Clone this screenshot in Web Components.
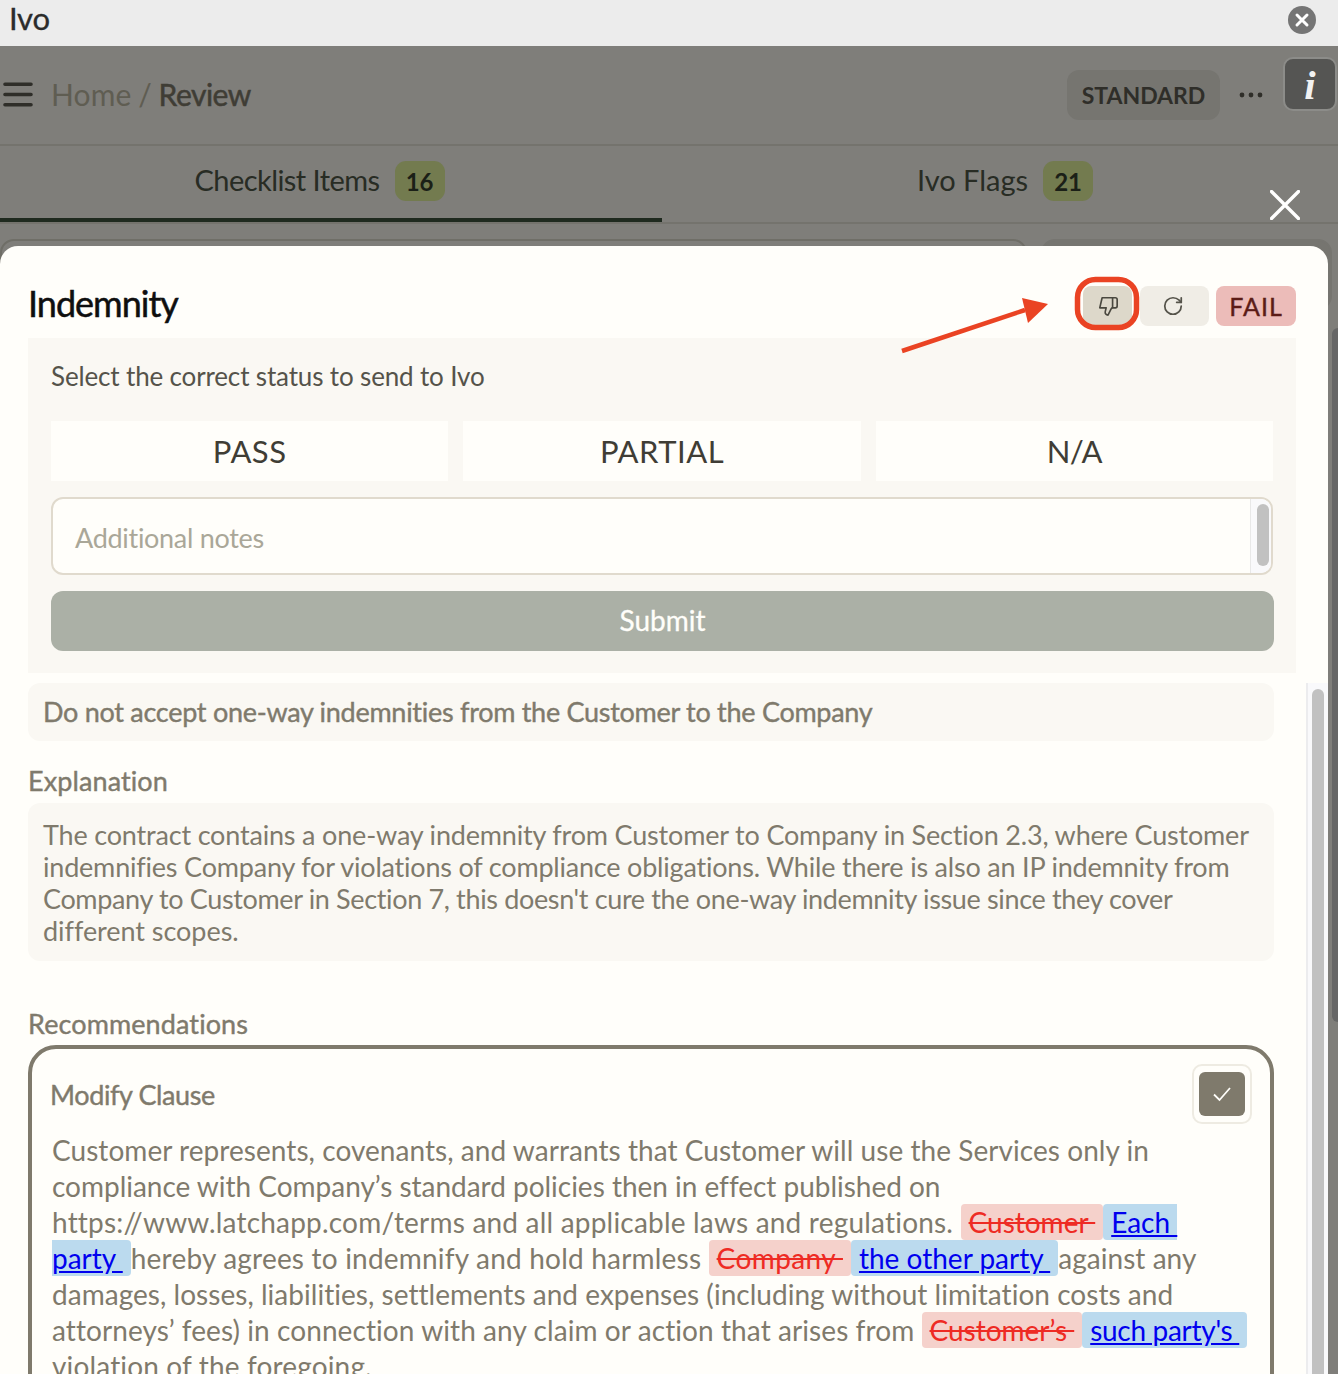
<!DOCTYPE html>
<html lang="en">
<head>
<meta charset="utf-8">
<title>Ivo</title>
<style>
  html, body { margin: 0; height: 1374px; overflow: hidden; background: #7f7e7a; font-family: Lato, "Noto Sans", sans-serif; }
</style>
</head>
<body>
<ivo-window>
  <ivo-page></ivo-page>
  <ivo-modal></ivo-modal>
</ivo-window>

<script>
// small helper so each element only has to give its markup
class Base extends HTMLElement {
  constructor () {
    super()
    this.attachShadow({ mode: 'open' }).innerHTML = this.constructor.markup
  }
}

customElements.define('ivo-window', class extends Base {
  static markup = `
  <style>
    :host { display: block; position: relative; height: 1374px; overflow: hidden; }
    .title { height: 46px; background: #ececec; display: flex; align-items: center; justify-content: space-between; padding: 0 22px 0 9px; box-sizing: border-box; font-size: 31px; color: #2b2b2b; }
    .title span { position: relative; top: -5px; -webkit-text-stroke: .3px; letter-spacing: -.2px; }
    .title svg { display: block; position: relative; top: -3px; }
  </style>
  <div class="title">
    <span>Ivo</span>
    <svg width="28" height="28" viewBox="0 0 28 28"><circle cx="14" cy="14" r="14" fill="#757575"/><path d="M9 9l10 10M19 9L9 19" stroke="#fff" stroke-width="3" stroke-linecap="round"/></svg>
  </div>
  <slot></slot>`
})

customElements.define('ivo-page', class extends Base {
  static markup = `
  <style>
    :host { display: block; }
    header { height: 100px; box-sizing: border-box; border-bottom: 2px solid #74736d; display: flex; align-items: center; padding: 0 1px 0 3px; font-size: 30px; }
    .burger { margin-right: 18px; display: block; margin-top: -2px; }
    .crumb { color: #5f5d52; letter-spacing: .1px; margin-top: -2px; word-spacing: -1px; }
    .crumb b { color: #3f3d35; font-weight: 400; -webkit-text-stroke: .5px; letter-spacing: -.5px; }
    .spacer { flex: 1; }
    .std { width: 153px; height: 50px; border-radius: 12px; background: #767570; color: #2f2e29; font-size: 23px; font-weight: 700; display: flex; align-items: center; justify-content: center; }
    .dots { margin: 0 20px 0 19px; display: block; }
    .info { width: 54px; height: 54px; box-sizing: border-box; margin-top: -22px; border-radius: 10px; background: #555553; border: 2px solid #8c8c89; color: #f2f2f2; font: italic 700 41px/52px "Liberation Serif", serif; text-align: center; }
    nav { height: 78px; box-sizing: border-box; border-bottom: 2px solid #74736d; display: flex; }
    .tab { flex: 1; height: 76px; box-sizing: border-box; display: flex; align-items: center; justify-content: center; gap: 15px; font-size: 29px; color: #282c24; padding: 0 0 6px 10px; }
    .tab.on { border-bottom: 4px solid #1f2a1f; padding: 0 23px 2px 0; flex: 0 0 662px; letter-spacing: -.55px; }
    .lbl { margin-top: -3px; }
    .badge { height: 40px; min-width: 50px; border-radius: 11px; background: #737b4f; color: #1b2017; font-size: 24px; font-weight: 700; letter-spacing: 0; display: flex; align-items: center; justify-content: center; }
    .behind { display: flex; gap: 14px; padding-top: 15px; }
    .behind div { height: 71px; border: 2px solid #6f6e67; border-radius: 14px; background: #7f7e7a; box-sizing: border-box; }
    .behind .a { width: 1027px; }
    .behind .b { width: 291px; background: #767570; border-color: #767570; }
    .bar { position: absolute; right: 0; top: 328px; width: 6px; height: 694px; background: #666; border-radius: 6px 0 0 6px; }
    .close { position: absolute; left: 1270px; top: 190px; display: block; }
  </style>
  <header>
    <svg class="burger" width="30" height="25" viewBox="0 0 30 25"><path d="M2 2.2h26M2 12.5h26M2 22.8h26" stroke="#2f2e29" stroke-width="3.6" stroke-linecap="round"/></svg>
    <span class="crumb">Home / <b>Review</b></span>
    <span class="spacer"></span>
    <span class="std">STANDARD</span>
    <svg class="dots" width="24" height="6" viewBox="0 0 24 6"><circle cx="3" cy="3" r="2.4" fill="#2f2e29"/><circle cx="12" cy="3" r="2.4" fill="#2f2e29"/><circle cx="21" cy="3" r="2.4" fill="#2f2e29"/></svg>
    <span class="info">i</span>
  </header>
  <nav>
    <div class="tab on"><span class="lbl">Checklist Items</span> <span class="badge">16</span></div>
    <div class="tab"><span class="lbl">Ivo Flags</span> <span class="badge">21</span></div>
  </nav>
  <div class="behind"><div class="a"></div><div class="b"></div></div>
  <div class="bar"></div>
  <svg class="close" width="30" height="30" viewBox="0 0 30 30"><path d="M1.5 1.5l27 27M28.5 1.5l-27 27" stroke="#fff" stroke-width="3.4" stroke-linecap="round"/></svg>`
})

customElements.define('ivo-modal', class extends Base {
  static markup = `
  <style>
    :host { display: flex; flex-direction: column; position: absolute; left: 0; top: 246px; width: 1328px; height: 1128px; background: #fffefa; border-radius: 18px 18px 0 0; color: #7f7a6c; }
    .head { height: 92px; flex: none; box-sizing: border-box; padding: 40px 32px 0 28px; display: flex; align-items: flex-start; }
    h1 { margin: -5px 0 0; font-size: 36px; line-height: 44px; font-weight: 400; -webkit-text-stroke: .5px; color: #0f0f0f; letter-spacing: -1px; flex: 1; }
    .act { height: 40px; display: flex; align-items: center; justify-content: center; border-radius: 8px; margin-left: 8px; }
    .thumb { width: 49px; background: #ddd8ca; }
    .redo { width: 69px; background: #f0ede6; margin-left: 8px; }
    .redo svg { margin-left: -3px; }
    .fail { width: 80px; background: #ecbcb9; color: #5c1c17; font-size: 25px; -webkit-text-stroke: .4px; letter-spacing: 1px; margin-left: 7px; }
    .main { flex: 1; display: flex; min-height: 0; padding-top: 10px; }
    .col { width: 1246px; margin-left: 28px; overflow: hidden; display: block; }
    h2 { margin: -1px 0 1px; font-size: 27px; line-height: 34px; font-weight: 400; -webkit-text-stroke: .4px; color: #7f7a6c; letter-spacing: .1px; }
    .box { background: #faf8f3; border-radius: 12px; padding: 13px 15px; font-size: 27px; line-height: 32px; letter-spacing: -.18px; box-sizing: border-box; white-space: nowrap; }
    .rule { height: 58px; padding: 13px 15px; -webkit-text-stroke: .4px; letter-spacing: -.28px; margin-bottom: 24px; }
    .why { height: 158px; margin: 5px 0 47px; padding-top: 16px; }
    .l2 { letter-spacing: -.2px; }
    .l3 { letter-spacing: -.35px; }
    .l4 { letter-spacing: -.05px; }
    .rec { margin-top: 4px; }
    ivo-scrollbar { margin-left: 32px; }
  </style>
  <div class="head">
    <h1>Indemnity</h1>
    <span class="act thumb"><svg width="22" height="22" viewBox="0 0 24 24" fill="none" stroke="#4a483f" stroke-width="1.8" stroke-linejoin="round"><path d="M17 14V3"/><path d="M9 18.1 10 14H3l2.6-11H20a2 2 0 0 1 2 2v7a2 2 0 0 1-2 2h-2.8a2 2 0 0 0-1.8 1.1L12 22a3.1 3.1 0 0 1-3-3.9Z"/></svg></span>
    <span class="act redo"><svg width="22" height="22" viewBox="0 0 24 24" fill="none" stroke="#55534a" stroke-width="1.9" stroke-linecap="round" stroke-linejoin="round"><path d="M21 12a9 9 0 1 1-9-9c2.5 0 4.9 1 6.7 2.7L21 8"/><path d="M21 3v5h-5"/></svg></span>
    <span class="act fail">FAIL</span>
  </div>
  <ivo-status></ivo-status>
  <div class="main">
    <div class="col">
      <div class="box rule">Do not accept one-way indemnities from the Customer to the Company</div>
      <h2>Explanation</h2>
      <div class="box why">The contract contains a one-way indemnity from Customer to Company in Section 2.3, where Customer<br><span class="l2">indemnifies Company for violations of compliance obligations. While there is also an IP indemnity from</span><br><span class="l3">Company to Customer in Section 7, this doesn't cure the one-way indemnity issue since they cover</span><br><span class="l4">different scopes.</span></div>
      <h2>Recommendations</h2>
      <ivo-clause class="rec"></ivo-clause>
    </div>
    <ivo-scrollbar></ivo-scrollbar>
  </div>
  <ivo-callout></ivo-callout>`
})

customElements.define('ivo-status', class extends Base {
  static markup = `
  <style>
    :host { display: block; flex: none; box-sizing: border-box; width: 1268px; height: 335px; margin-left: 28px; background: #faf8f3; padding: 21px 22px 0 23px; color: #55534a; }
    p { margin: 0 0 28px; font-size: 26px; line-height: 34px; letter-spacing: -.15px; }
    .opts { display: flex; gap: 15px; margin-right: 1px; }
    .opts span { flex: 1; height: 60px; background: #fffefa; display: flex; align-items: center; justify-content: center; font-size: 31px; color: #3f3d35; letter-spacing: .5px; }
    .opts .na { letter-spacing: -.6px; }
    .notes { height: 78px; box-sizing: border-box; margin: 16px 1px 16px 0; border: 2px solid #e0dacd; border-radius: 12px; background: #fffefa; display: flex; overflow: hidden; }
    .ph { flex: 1; padding: 0 22px; line-height: 78px; font-size: 27px; letter-spacing: -.3px; color: #aaa798; }
    .sb { width: 20px; border-left: 1px solid #e8e8e8; background: #f9f9fb; position: relative; }
    .sb i { position: absolute; left: 6px; top: 5px; width: 12px; height: 62px; border-radius: 6px; background: #c1c1c1; }
    button { display: block; width: 100%; height: 60px; padding: 0 0 2px; border: 0; border-radius: 12px; background: #abb0a6; color: #fffefa; font: 400 28px Lato, sans-serif; -webkit-text-stroke: .3px; }
  </style>
  <p>Select the correct status to send to Ivo</p>
  <div class="opts"><span>PASS</span><span>PARTIAL</span><span class="na">N/A</span></div>
  <div class="notes"><div class="ph">Additional notes</div><div class="sb"><i></i></div></div>
  <button>Submit</button>`
})

customElements.define('ivo-clause', class extends Base {
  static markup = `
  <style>
    :host { display: block; box-sizing: border-box; height: 400px; border: 4px solid #7f7a6c; border-radius: 28px; padding: 17px 18px 0 20px; margin-top: 4px; position: relative; background: #fffefa; }
    .top { display: flex; justify-content: space-between; }
    h3 { margin: 12px 0 0 -2px; font-size: 27px; line-height: 34px; font-weight: 400; -webkit-text-stroke: .4px; letter-spacing: -.4px; color: #7f7a6c; }
    .check { width: 60px; height: 60px; box-sizing: border-box; border: 2px solid #eeebe2; border-radius: 10px; display: flex; align-items: center; justify-content: center; background: #fffefa; margin: -2px 0 0; }
    .check span { width: 46px; height: 44px; background: #7f7a6c; border-radius: 6px; display: flex; align-items: center; justify-content: center; }
    .text { margin-top: 8px; font-size: 28px; line-height: 36px; letter-spacing: .05px; color: #7f7a6c; white-space: nowrap; }
    .del, .ins { display: inline-block; height: 36px; line-height: 36px; border-radius: 4px; padding: 0 8px; vertical-align: top; white-space: pre; letter-spacing: 0; }
    .del { background: #f5d1cb; color: #ee2b24; text-decoration: line-through; }
    .wide { letter-spacing: .4px; }
    .ins { background: #bbdaee; }
    .ins a { color: #0000ee; text-decoration: underline; }
    .tight { letter-spacing: -.3px; }
    .cut { padding-right: 0; border-radius: 4px 0 0 4px; }
    .cont { padding-left: 0; border-radius: 0 4px 4px 0; }
    .l2 { letter-spacing: -.02px; }
    .l3 { letter-spacing: .2px; }
    .l4 { letter-spacing: .2px; }
    .l5 { letter-spacing: .03px; }
    .l6 { letter-spacing: .08px; }
    .l7 { letter-spacing: .15px; }
  </style>
  <div class="top">
    <h3>Modify Clause</h3>
    <div class="check"><span><svg width="20" height="18" viewBox="0 0 20 18" fill="none" stroke="#fffefa" stroke-width="1.8"><path d="M2 9.5l5.5 5.5L18 3"/></svg></span></div>
  </div>
  <div class="text">Customer represents, covenants, and warrants that Customer will use the Services only in<br><span class="l2">compliance with Company’s standard policies then in effect published on</span><br><span class="l3">https://www.latchapp.com/terms and all applicable laws and regulations. </span><span class="del">Customer </span><span class="ins cut"><a href="#">Each </a></span><br><span class="ins cont"><a href="#">party </a></span><span class="l4">hereby agrees to indemnify and hold harmless </span><span class="del wide">Company </span><span class="ins"><a href="#">the other party </a></span>against any<br><span class="l5">damages, losses, liabilities, settlements and expenses (including without limitation costs and</span><br><span class="l6">attorneys’ fees) in connection with any claim or action that arises from </span><span class="del">Customer’s </span><span class="ins tight"><a href="#">such party's </a></span><br><span class="l7">violation of the foregoing.</span></div>`
})

customElements.define('ivo-scrollbar', class extends Base {
  static markup = `
  <style>
    :host { display: block; position: relative; width: 22px; flex: none; box-sizing: border-box; border-left: 2px solid #ececee; background: #f9f9fb; }
    i { position: absolute; left: 4px; top: 6px; bottom: -10px; width: 12px; border-radius: 6px 6px 0 0; background: #c1c1c1; }
  </style>
  <i></i>`
})

// the red ring and arrow somebody drew on top of the screenshot
customElements.define('ivo-callout', class extends Base {
  static markup = `
  <style>
    :host { display: block; position: absolute; left: 900px; top: 26px; width: 245px; height: 85px; pointer-events: none; }
    svg { display: block; }
  </style>
  <svg width="245" height="85" viewBox="0 0 245 85">
    <rect x="177.5" y="7.5" width="59" height="48" rx="18" fill="none" stroke="#ea4323" stroke-width="5.5"/>
    <path d="M2 79 L125 38" stroke="#ea4323" stroke-width="4.5"/>
    <path d="M148 32 L122 26 L128 51 Z" fill="#ea4323"/>
  </svg>`
})
</script>
</body>
</html>
